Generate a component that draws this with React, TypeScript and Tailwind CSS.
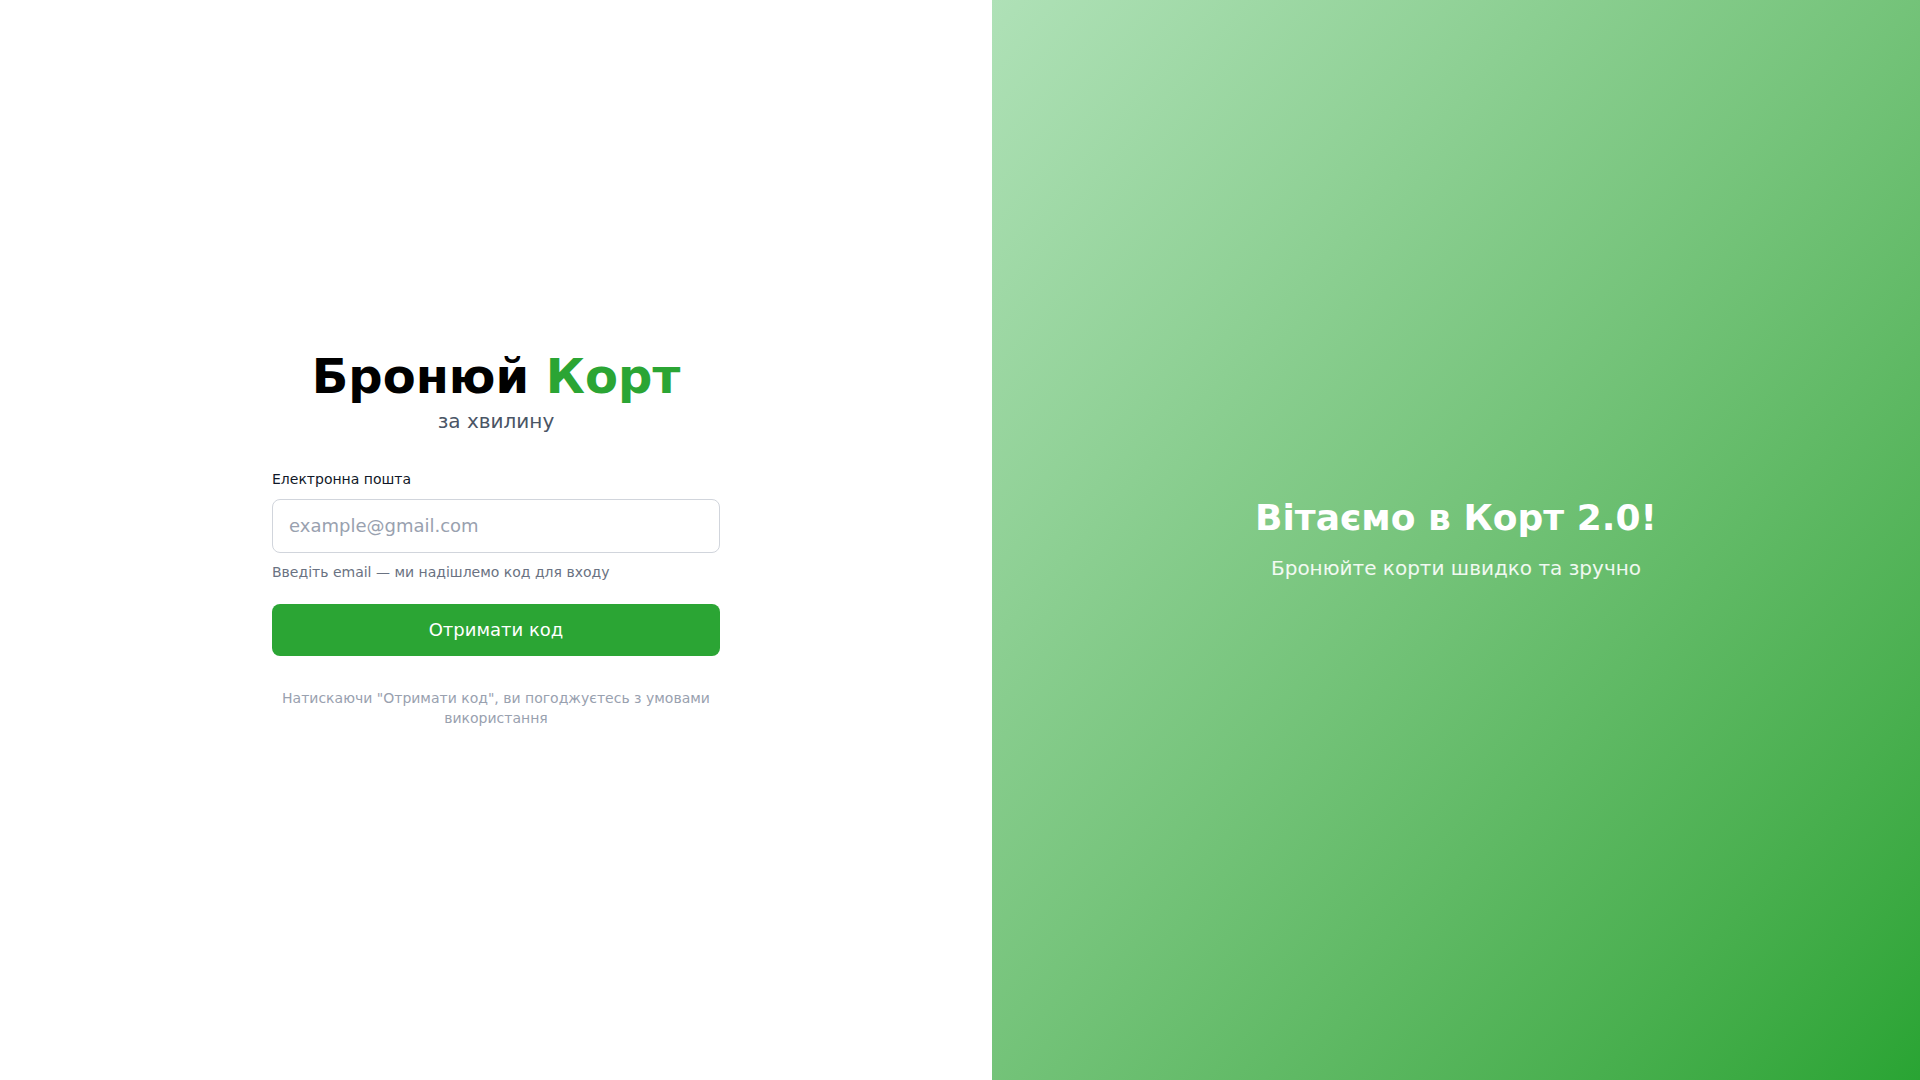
export default function App() {
  return (
    <div className="flex h-[1080px] w-full font-['DejaVu_Sans',sans-serif]">
      <div className="flex w-[992px] items-center justify-center bg-white">
        <div className="w-[448px]">
          <div className="text-center">
            <h1 className="text-5xl font-bold leading-none text-black">
              Бронюй <span className="text-[#2ba534]">Корт</span>
            </h1>
            <p className="mt-[7px] text-xl text-gray-600">за хвилину</p>
          </div>

          <form className="mt-[34px]" onSubmit={(e) => e.preventDefault()}>
            <label htmlFor="email" className="mb-2.5 block text-sm text-gray-900">
              Електронна пошта
            </label>
            <input
              id="email"
              type="email"
              placeholder="example@gmail.com"
              className="block w-full rounded-lg border border-gray-300 px-4 py-3 text-lg text-gray-900 placeholder:text-gray-400 outline-none"
            />
            <p className="mt-[9px] text-sm text-gray-500">Введіть email — ми надішлемо код для входу</p>

            <button
              type="submit"
              className="mt-[22px] w-full rounded-lg bg-[#2ba534] py-3 text-lg text-white"
            >
              Отримати код
            </button>
          </form>

          <p className="mt-8 text-center text-sm text-gray-400">
            Натискаючи "Отримати код", ви погоджуєтесь з умовами використання
          </p>
        </div>
      </div>

      <div className="flex flex-1 flex-col items-center justify-center bg-gradient-to-br from-[#afe1b7] to-[#29a433] text-white">
        <h2 className="text-4xl font-bold">Вітаємо в Корт 2.0!</h2>
        <p className="mt-4 text-xl text-white/90">Бронюйте корти швидко та зручно</p>
      </div>
    </div>
  );
}
